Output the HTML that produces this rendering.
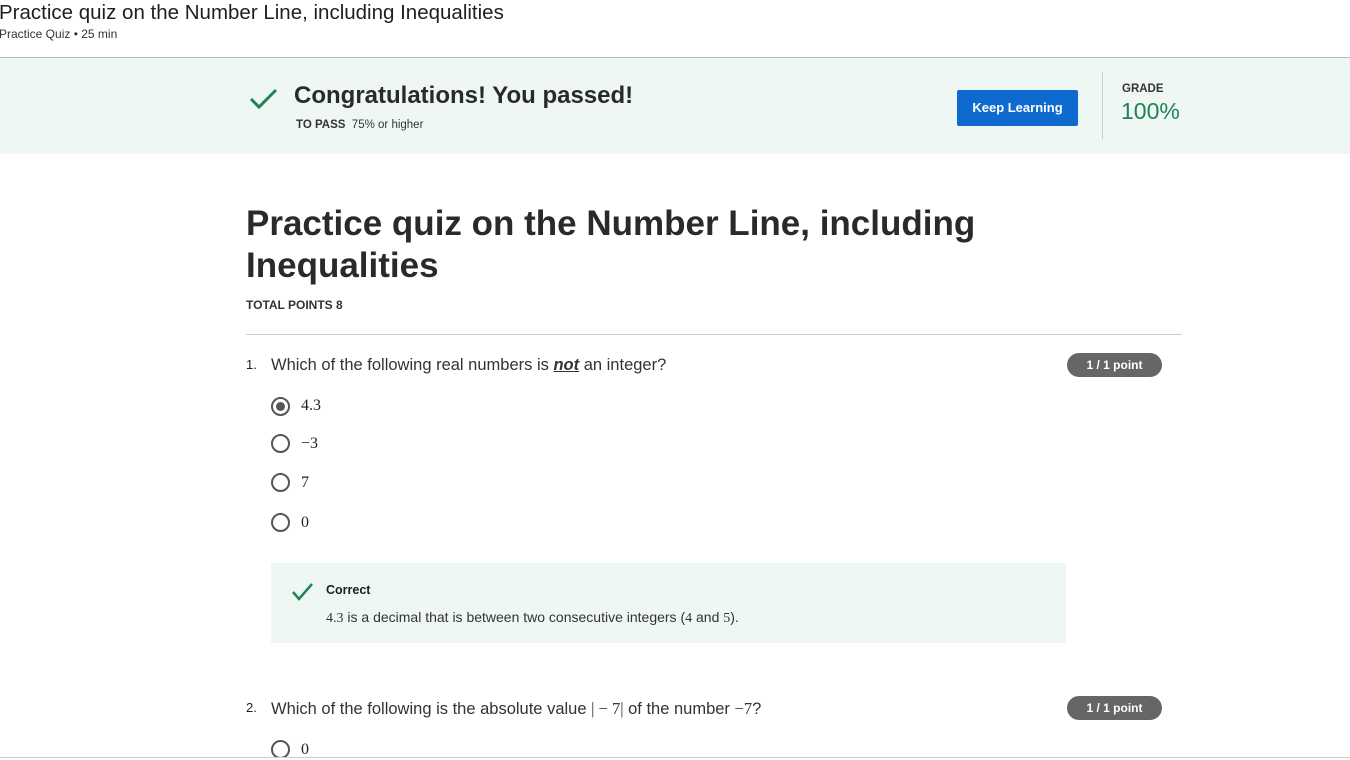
<!DOCTYPE html>
<html><head><meta charset="utf-8"><style>
*{margin:0;padding:0;box-sizing:border-box}
body{width:1350px;height:760px;overflow:hidden;background:#fff;font-family:"Liberation Sans",sans-serif;color:#1f1f1f;position:relative}
.a{position:absolute;white-space:nowrap}
.m{font-family:"Liberation Serif",serif}
.radio{position:absolute;width:19px;height:19px;border:2px solid #555;border-radius:50%}
.pill{position:absolute;left:1067px;width:95px;height:24px;background:#666;color:#fff;border-radius:12px;font-size:12px;font-weight:bold;text-align:center;line-height:24px}
</style></head><body>
<div class="a" style="left:-1px;top:1px;font-size:20.5px;color:#1f1f1f">Practice quiz on the Number Line, including Inequalities</div>
<div class="a" style="left:-1px;top:27px;font-size:12px;color:#333">Practice Quiz • 25 min</div>
<div class="a" style="left:0;top:57px;width:1350px;height:1px;background:#bbb"></div>
<div class="a" style="left:0;top:58px;width:1350px;height:96px;background:#eff7f4"></div>
<svg class="a" style="left:249px;top:87px" width="30" height="24" viewBox="0 0 30 24"><path d="M2 12 L10 20 L27 3" fill="none" stroke="#1f8354" stroke-width="3"/></svg>
<div class="a" style="left:294px;top:82px;font-size:24px;font-weight:bold;color:#2a2a2a">Congratulations! You passed!</div>
<div class="a" style="left:296px;top:119px;font-size:11.5px;color:#333"><b>TO PASS</b>&nbsp; 75% or higher</div>
<div class="a" style="left:957px;top:90px;width:121px;height:36px;background:#0f6ad0;border-radius:2px;color:#fff;font-size:13px;font-weight:bold;text-align:center;line-height:36px">Keep Learning</div>
<div class="a" style="left:1102px;top:72px;width:1px;height:67px;background:#ccc"></div>
<div class="a" style="left:1122px;top:83px;font-size:11.5px;font-weight:bold;color:#333">GRADE</div>
<div class="a" style="left:1121px;top:98px;font-size:23px;color:#1f8354">100%</div>
<div class="a" style="left:246px;top:203px;font-size:35px;font-weight:bold;line-height:42px;color:#2a2a2a;white-space:normal;width:800px">Practice quiz on the Number Line, including Inequalities</div>
<div class="a" style="left:246px;top:298px;font-size:12px;font-weight:bold;color:#333">TOTAL POINTS 8</div>
<div class="a" style="left:246px;top:334px;width:936px;height:1px;background:#ccc"></div>
<div class="a" style="left:246px;top:357px;font-size:13px">1.</div>
<div class="a" style="left:271px;top:356px;font-size:16.5px;color:#333">Which of the following real numbers is <b><i><u>not</u></i></b> an integer?</div>
<div class="pill" style="top:353px">1 / 1 point</div>
<div class="radio" style="left:271px;top:397px"></div><div class="a" style="left:276px;top:402px;width:9px;height:9px;border-radius:50%;background:#555"></div>
<div class="a m" style="left:301px;top:397px;font-size:16px">4.3</div>
<div class="radio" style="left:271px;top:434px"></div><div class="a m" style="left:301px;top:435px;font-size:16px">−3</div>
<div class="radio" style="left:271px;top:473px"></div><div class="a m" style="left:301px;top:474px;font-size:16px">7</div>
<div class="radio" style="left:271px;top:513px"></div><div class="a m" style="left:301px;top:514px;font-size:16px">0</div>
<div class="a" style="left:271px;top:563px;width:795px;height:80px;background:#eff7f4"></div>
<svg class="a" style="left:291px;top:582px" width="24" height="20" viewBox="0 0 24 20"><path d="M2 10 L8 17 L21 2" fill="none" stroke="#1f8354" stroke-width="2.5"/></svg>
<div class="a" style="left:326px;top:583px;font-size:12.5px;font-weight:bold">Correct</div>
<div class="a" style="left:326px;top:609px;font-size:14px;color:#333"><span class="m">4.3</span> is a decimal that is between two consecutive integers (<span class="m">4</span> and <span class="m">5</span>).</div>
<div class="a" style="left:246px;top:700px;font-size:13px">2.</div>
<div class="a" style="left:271px;top:699px;font-size:16.5px;color:#333">Which of the following is the absolute value <span class="m">|&nbsp;−&nbsp;7|</span> of the number <span class="m">−7</span>?</div>
<div class="pill" style="top:696px">1 / 1 point</div>
<div class="radio" style="left:271px;top:740px"></div><div class="a m" style="left:301px;top:741px;font-size:16px">0</div>
<div class="a" style="left:0;top:757px;width:1350px;height:3px;background:#fff;border-top:1px solid #ccc"></div>
</body></html>
